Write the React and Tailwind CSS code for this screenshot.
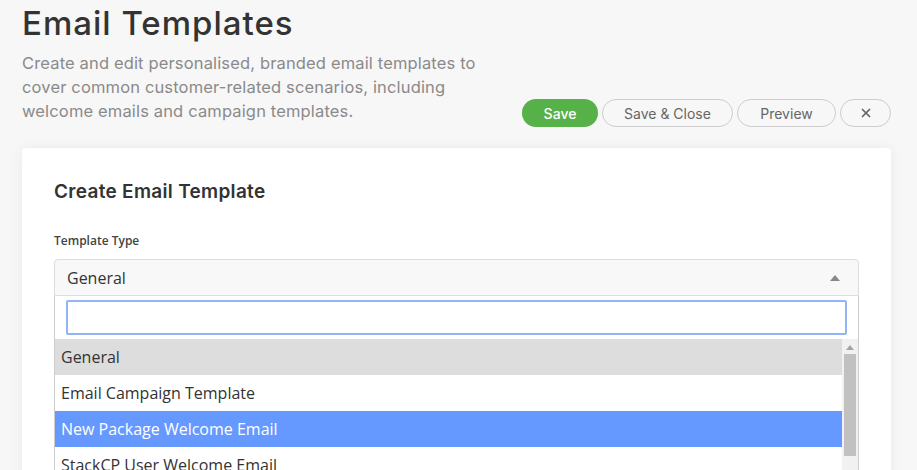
import { X } from "lucide-react";

const options = [
  { label: "General", state: "selected" },
  { label: "Email Campaign Template", state: "" },
  { label: "New Package Welcome Email", state: "active" },
  { label: "StackCP User Welcome Email", state: "" },
];

const optionStyles = {
  selected: "bg-[#dddddd] text-[#333]",
  active: "bg-[#6699ff] text-white",
  "": "bg-white text-[#333]",
};

export default function App() {
  return (
    <div className="w-[917px] h-[470px] overflow-hidden bg-[#f7f7f7] pl-[22px] pr-[26px] font-['Inter',sans-serif]">
      {/* header */}
      <h1 className="pt-[2px] text-[33px] leading-[42px] font-medium tracking-[1px] text-[#333]">
        Email Templates
      </h1>
      <div className="flex items-end justify-between mt-[7px]">
        <p className="w-[470px] text-[16.5px] leading-6 text-[#8a8a8a] tracking-[0.15px]">
          Create and edit personalised, branded email templates to cover common customer-related scenarios, including welcome emails and campaign templates.
        </p>
        <div className="flex gap-[4px] mb-[-4px] text-[14px]">
          <button className="w-[76px] h-[28px] rounded-full bg-[#56b148] text-white font-medium">Save</button>
          <button className="w-[131px] h-[28px] rounded-full border border-[#cccccc] bg-[#f7f7f7] text-[#666]">Save &amp; Close</button>
          <button className="w-[99px] h-[28px] rounded-full border border-[#cccccc] bg-[#f7f7f7] text-[#666]">Preview</button>
          <button className="w-[51px] h-[28px] rounded-full border border-[#cccccc] bg-[#f7f7f7] text-[#666] flex items-center justify-center">
            <X size={14} strokeWidth={3} />
          </button>
        </div>
      </div>

      {/* card */}
      <div className="mt-[25px] bg-white rounded-[4px] shadow-[0_0_14px_rgba(0,0,0,0.06)] px-[32px] pt-[31px] h-[400px]">
        <h2 className="text-[19px] leading-[26px] font-semibold text-[#333] tracking-[0.3px]">Create Email Template</h2>
        <div className="mt-[27px] font-['Open_Sans',sans-serif]">
          <div className="text-[12px] font-semibold text-[#444] leading-[18px]">Template Type</div>
          <div className="mt-[9px] h-[37px] flex items-center justify-between rounded-t-[4px] border border-[#dddddd] bg-[#f8f8f8] pl-[12px] pr-[18px]">
            <span className="text-[16px] text-[#333]">General</span>
            <svg width="10" height="6" viewBox="0 0 10 6"><path d="M5 0L10 6H0Z" fill="#888" /></svg>
          </div>
          <div className="border-x border-[#cccccc] bg-white">
            <div className="px-[11px] py-[4px]">
              <div className="h-[35px] rounded-[2px] border-2 border-[#92b3f8] bg-white"></div>
            </div>
            <div className="flex">
              <div className="flex-1">
                {options.map((o) => (
                  <div key={o.label} className={`h-[36px] flex items-center px-[6px] text-[16px] ${optionStyles[o.state]}`}>
                    {o.label}
                  </div>
                ))}
              </div>
              <div className="w-[16px] bg-[#f1f1f1] flex flex-col items-center">
                <svg className="mt-[6px]" width="8" height="5" viewBox="0 0 8 5"><path d="M4 0L8 5H0Z" fill="#a3a3a3" /></svg>
                <div className="mt-[4px] w-[12px] h-[102px] bg-[#c1c1c1]"></div>
              </div>
            </div>
          </div>
        </div>
      </div>
    </div>
  );
}
